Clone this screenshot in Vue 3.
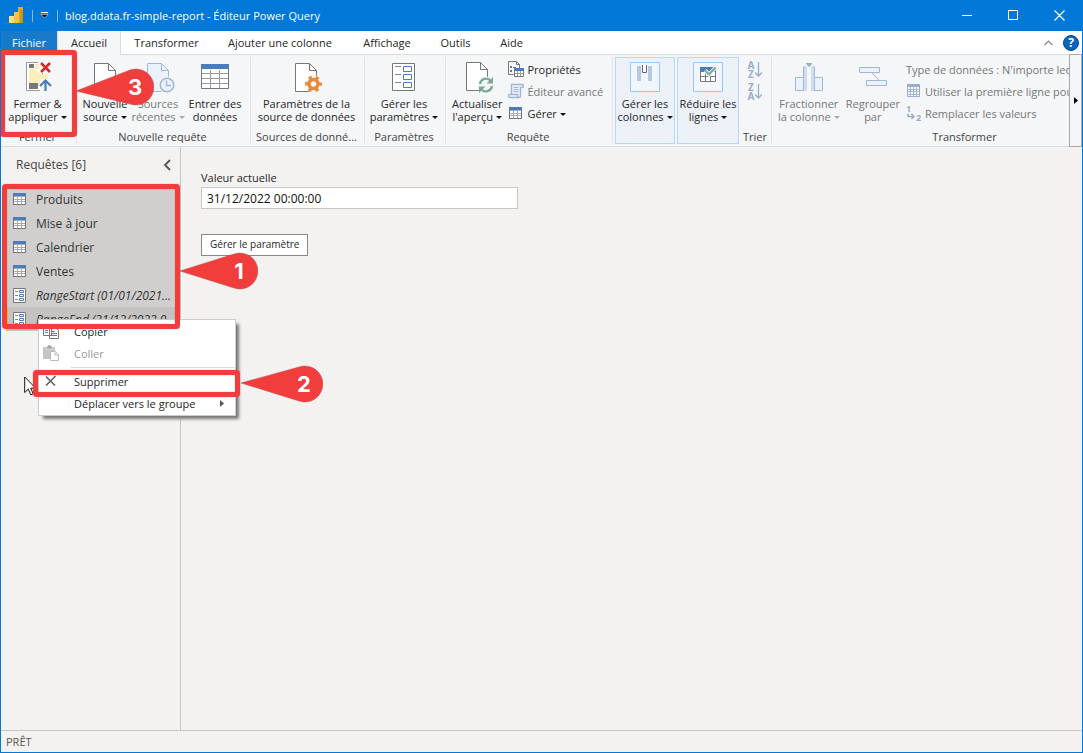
<script setup>
import { ref } from 'vue'

const tabs = ['Fichier', 'Accueil', 'Transformer', 'Ajouter une colonne', 'Affichage', 'Outils', 'Aide']
const activeTab = ref('Accueil')
const currentValue = ref('31/12/2022 00:00:00')
const queries = [
  { name: 'Produits', kind: 'table' },
  { name: 'Mise à jour', kind: 'table' },
  { name: 'Calendrier', kind: 'table' },
  { name: 'Ventes', kind: 'table' },
  { name: 'RangeStart (01/01/2021...', kind: 'param' },
  { name: 'RangeEnd (31/12/2022 0...', kind: 'param', current: true },
]
</script>

<template>
  <div class="window">
    <svg class="defs" width="0" height="0" aria-hidden="true">
      <symbol id="doc" viewBox="0 0 22 29">
        <path d="M.5.5h14l7 7v21H.5z" fill="#fff" stroke="currentColor" />
        <path d="M14.5.5v7h7" fill="none" stroke="currentColor" />
      </symbol>
      <symbol id="table" viewBox="0 0 13 12">
        <path d="M0 0h13v12H0z" fill="#777" />
        <path d="M1 3h11v8H1z" fill="#aaa" />
        <path d="M0 0h13v3H0z" fill="#4a7ebb" />
        <path d="M1 4h3v2H1zM5 4h3v2H5zM9 4h3v2H9zM1 7h3v1H1zM5 7h3v1H5zM9 7h3v1H9zM1 9h3v2H1zM5 9h3v2H5zM9 9h3v2H9z" fill="#fff" />
      </symbol>
      <symbol id="param" viewBox="0 0 13 15">
        <path d="M.5.5h12v14H.5z" fill="#fff" stroke="#777" />
        <path d="M2 3.5h3M2 7.5h3M2 11.5h3" stroke="#888" />
        <path d="M6.500 2.500h4v2h-4zM6.500 6.500h4v2h-4zM6.500 10.500h4v2h-4z" fill="#fff" stroke="#4a7ebb" />
      </symbol>
    </svg>

    <header class="titlebar">
      <svg class="logo" width="16" height="18" viewBox="0 0 16 18" aria-hidden="true">
        <path d="M9 0h5v16H9z" fill="#e4a81c" /><path d="M5 5h5v11H5z" fill="#f4c640" /><path d="M0 9h5v7H0z" fill="#fce07d" />
        <path d="M11 3h3v13h-3z" fill="#d59210" />
      </svg>
      <span class="bar"></span>
      <button class="quick" aria-label="Personnaliser la barre d'accès rapide">
        <svg width="9" height="9" viewBox="0 0 9 9"><path d="M1 1.500h7" stroke="#fff" /><path d="M1 3.500h7L4.500 7z" fill="#000" stroke="#fff" stroke-width=".5" /></svg>
      </button>
      <span class="bar"></span>
      <h1>blog.ddata.fr-simple-report - Éditeur Power Query</h1>
      <button class="sys" aria-label="Réduire"><svg width="11" height="11"><path d="M0 5.500h10" stroke="#fff" /></svg></button>
      <button class="sys" aria-label="Agrandir"><svg width="11" height="11"><path d="M.5.5h9v9h-9z" fill="none" stroke="#fff" /></svg></button>
      <button class="sys" aria-label="Fermer"><svg width="11" height="11"><path d="M.5.5l10 10M10.500.5l-10 10" stroke="#fff" stroke-width="1.200" /></svg></button>
    </header>

    <nav class="tabs">
      <button v-for="t in tabs" :key="t" class="tab" :class="{ file: t === 'Fichier', active: t === activeTab }" @click="activeTab = t">{{ t }}</button>
      <span class="tab-tools">
        <button class="plain" aria-label="Réduire le ruban"><svg width="9" height="6"><path d="M.5 5l4-4 4 4" fill="none" stroke="#888" stroke-width="1.200" /></svg></button>
        <button class="help" aria-label="Aide en ligne">?</button>
      </span>
    </nav>

    <section class="ribbon">
      <div class="group g-close">
        <div class="tools">
          <button class="big">
            <svg width="28" height="32" viewBox="-2 0 28 32">
              <path d="M.5 1.500h16v28H.5z" fill="#fff" stroke="#999" />
              <path d="M3 8h5l8 6v10H3z" fill="#fbeeb9" /><path d="M3 3h5v4H3z" fill="#777" /><path d="M9 3h6v5H9z" fill="#fbeeb9" />
              <path d="M3 22h9v6H3z" fill="#777" />
              <path d="M12 0h12v12H14z" fill="#f5f6f7" />
              <path d="M14 13h8v6h-8z" fill="#fbeeb9" />
              <path d="M15 2l9 9M24 2l-9 9" stroke="#d02b2b" stroke-width="2.500" />
              <path d="M14 18h12v13H14z" fill="#f5f6f7" />
              <path d="M19.500 30V20M14 25l5.500-5.500L25 25" fill="none" stroke="#4a7ebb" stroke-width="2.200" />
            </svg>
            <span>Fermer &amp;<br>appliquer<i class="caret"></i></span>
          </button>
        </div>
        <div class="caption">Fermer</div>
      </div>

      <div class="group g-new">
        <div class="tools">
          <button class="big">
            <svg class="gray" width="22" height="32" viewBox="0 -2 22 32"><use href="#doc" width="22" height="29" /></svg>
            <span>Nouvelle<br>source<i class="caret"></i></span>
          </button>
          <button class="big off">
            <svg class="pale" width="34" height="32" viewBox="-6 -2 34 32">
              <path d="M.5.5h14l7 7v21H.5z" fill="#eaf1fb" stroke="#a3b6d4" /><path d="M14.500.5v7h7" fill="none" stroke="#a3b6d4" />
              <circle cx="20" cy="22" r="8.500" fill="#f5f6f7" /><circle cx="20" cy="22" r="6.800" fill="#eaf1fb" stroke="#a3b6d4" stroke-width="1.600" /><path d="M19.500 17.500v5h4.500" fill="none" stroke="#a3b6d4" stroke-width="1.400" />
            </svg>
            <span>Sources<br>récentes<i class="caret"></i></span>
          </button>
          <button class="big">
            <svg width="28" height="32" viewBox="0 -3 28 32">
              <path d="M.5.5h27v24H.5z" fill="#fff" stroke="#777" /><path d="M9.500 6v18M18.500 6v18M1 9.500h26M1 14.500h26M1 19.500h26" stroke="#999" /><path d="M0 0h28v5H0z" fill="#4a7ebb" />
            </svg>
            <span>Entrer des<br>données</span>
          </button>
        </div>
        <div class="caption">Nouvelle requête</div>
      </div>

      <div class="group g-sources">
        <div class="tools">
          <button class="big">
            <svg class="gray" width="34" height="32" viewBox="-6 -2 34 32">
              <use href="#doc" width="22" height="29" /><circle cx="18.500" cy="21" r="9" fill="#f5f6f7" />
              <circle cx="18.500" cy="21" r="4.500" fill="none" stroke="#e58a3c" stroke-width="3.500" />
              <circle cx="18.500" cy="21" r="7" fill="none" stroke="#e58a3c" stroke-width="2.800" stroke-dasharray="3.400 3.930" stroke-dashoffset="1.700" />
            </svg>
            <span>Paramètres de la<br>source de données</span>
          </button>
        </div>
        <div class="caption">Sources de donné...</div>
      </div>

      <div class="group g-params">
        <div class="tools">
          <button class="big">
            <svg width="24" height="32" viewBox="0 -2 24 32">
              <path d="M.5.5h22v27H.5z" fill="#fff" stroke="#777" /><path d="M3 3.500h6M3 11.500h6M3 19.500h6" stroke="#888" />
              <path d="M11.500 3.500h8v5h-8zM11.500 11.500h8v5h-8zM11.500 19.500h8v5h-8z" fill="none" stroke="#4a7ebb" />
            </svg>
            <span>Gérer les<br>paramètres<i class="caret"></i></span>
          </button>
        </div>
        <div class="caption">Paramètres</div>
      </div>

      <div class="group g-query">
        <div class="tools">
          <button class="big">
            <svg class="gray" width="34" height="32" viewBox="-6 -1 34 32">
              <use href="#doc" width="22" height="29" /><circle cx="20" cy="23" r="8.500" fill="#f5f6f7" />
              <path d="M14 22a6.200 6.200 0 0 1 11-3M26 24a6.200 6.200 0 0 1-11 3" fill="none" stroke="#7aaa93" stroke-width="2.400" />
              <path d="M27 15v6.500h-6.500zM13 31v-6.500h6.500z" fill="#7aaa93" />
            </svg>
            <span>Actualiser<br>l'aperçu<i class="caret"></i></span>
          </button>
          <div class="stack">
            <button class="small">
              <svg width="16" height="16" viewBox="0 0 16 16">
                <path d="M.5 13.500V.5h8l3 3v4M8.500.5v3h3M.5 13.500h5" fill="none" stroke="#777" /><path d="M2 5h2v2H2zM2 9h2v2H2z" fill="#777" /><path d="M5 6.500h3" stroke="#777" />
                <path d="M6.500 8.500h9v7h-9z" fill="#fff" stroke="#777" /><path d="M9.500 9v6M12.500 9v6M7 12.500h8" stroke="#999" /><path d="M6 7h10v3H6z" fill="#4a7ebb" />
              </svg>Propriétés
            </button>
            <button class="small off">
              <svg width="16" height="16" viewBox="0 0 16 16">
                <path d="M3.500 11V1.500H14c2 0 2 3 0 3h-1.500V13c0 2-3 2-3 0v-1.500h-8c-2 0-1 3 .5 3h9" fill="#eaf1fb" stroke="#a3b6d4" stroke-width="1.400" /><path d="M5.500 4.500h5M5.500 6.500h5M5.500 8.500h5" stroke="#a3b6d4" />
              </svg>Éditeur avancé
            </button>
            <button class="small">
              <svg width="16" height="16" viewBox="-1 -2 16 16"><use href="#table" width="13" height="12" /></svg><span>Gérer<i class="caret"></i></span>
            </button>
          </div>
        </div>
        <div class="caption">Requête</div>
      </div>

      <button class="tile t-cols">
        <svg width="30" height="30" viewBox="0 0 30 30">
          <path d="M.5.5h29v29H.5z" fill="#f1f6fd" stroke="#9bc6f5" /><path d="M7 4h4v15H7zM18 4h4v15h-4z" fill="#b6c9e2" /><path d="M12.500 3v7.500h4V3" fill="#fff" stroke="#666" />
        </svg>
        <span>Gérer les<br>colonnes<i class="caret"></i></span>
      </button>
      <button class="tile t-rows">
        <svg width="30" height="30" viewBox="0 0 30 30">
          <path d="M.5.5h29v29H.5z" fill="#f1f6fd" stroke="#9bc6f5" /><path d="M7.500 9.500h15v10h-15z" fill="#fff" stroke="#777" /><path d="M12.500 10v9M17.500 10v9M8 14.500h14" stroke="#777" /><path d="M7 5h16v5H7z" fill="#4a7ebb" />
          <path d="M12 8.500l4 4 6.500-7" fill="none" stroke="#fff" stroke-width="4" /><path d="M12 8.500l4 4 6.500-7" fill="none" stroke="#7aaa93" stroke-width="2.200" />
        </svg>
        <span>Réduire les<br>lignes<i class="caret"></i></span>
      </button>

      <div class="group g-sort">
        <div class="tools sorts">
          <button class="sort" aria-label="Trier par ordre croissant">
            <span class="letters"><b>A</b><b>Z</b></span>
            <svg width="7" height="16"><path d="M3.500 0v14M0 10.500l3.500 3.500L7 10.500" fill="none" stroke="#9aaccb" stroke-width="1.300" /></svg>
          </button>
          <button class="sort" aria-label="Trier par ordre décroissant">
            <span class="letters"><b>Z</b><b>A</b></span>
            <svg width="7" height="16"><path d="M3.500 0v14M0 10.500l3.500 3.500L7 10.500" fill="none" stroke="#9aaccb" stroke-width="1.300" /></svg>
          </button>
        </div>
        <div class="caption">Trier</div>
      </div>

      <div class="group g-transform">
        <div class="tools">
          <button class="big off">
            <svg width="28" height="32" viewBox="0 -2 28 32">
              <path d="M8 27.500H.5v-13H8M20 27.500h7.500v-13H20" fill="#eaf3fd" stroke="#a3b6d4" /><path d="M8 3h4v25H8zM16 3h4v25h-4z" fill="#cfdcee" /><path d="M8.500 28V3.500M19.500 28V3.500" stroke="#a3b6d4" /><path d="M11 0h6v1l-3 3-3-3z" fill="#9aaccb" />
            </svg>
            <span>Fractionner<br>la colonne<i class="caret"></i></span>
          </button>
          <button class="big off">
            <svg width="28" height="32" viewBox="0 -2 28 32">
              <path d="M.5 4.500h20v5H.5zM7.500 17.500h20v5h-20z" fill="#eaf3fd" stroke="#a3b6d4" /><path d="M13 10l7 7" stroke="#a3b6d4" />
            </svg>
            <span>Regrouper<br>par</span>
          </button>
          <div class="stack wide">
            <button class="small off">Type de données : N'importe lequel</button>
            <button class="small off">
              <svg width="16" height="16" viewBox="0 0 16 16"><path d="M1.500 1.500h12v12h-12z" fill="#fff" stroke="#9aaccb" /><path d="M4.500 4v10M7.500 4v10M10.500 4v10M1 6.500h13M1 8.500h13M1 11.500h13" stroke="#a3b6d4" /><path d="M1 1h13v3H1z" fill="#9aaccb" /></svg>Utiliser la première ligne pour les en-têtes
            </button>
            <button class="small off">
              <svg width="16" height="16" viewBox="0 0 16 16"><text x="0" y="7">1</text><text x="10" y="16">2</text><path d="M2 8.500v3h6M5.500 9l2.500 2.500L5.500 14" fill="none" stroke="#9aaccb" stroke-width="1.500" /></svg>Remplacer les valeurs
            </button>
          </div>
        </div>
        <div class="caption">Transformer</div>
      </div>
      <button class="scroll" aria-label="Faire défiler le ruban"><svg width="4" height="7"><path d="M0 0l4 3.500L0 7z" fill="#000" /></svg></button>
    </section>

    <main class="body">
      <aside class="side">
        <div class="side-head">
          <h2>Requêtes [6]</h2>
          <button class="plain" aria-label="Réduire le volet"><svg width="8" height="12"><path d="M7 1L2 6l5 5" fill="none" stroke="#555" stroke-width="1.800" /></svg></button>
        </div>
        <ul class="queries">
          <li v-for="q in queries" :key="q.name" :class="{ param: q.kind === 'param', current: q.current }">
            <svg v-if="q.kind === 'table'" width="13" height="12"><use href="#table" width="13" height="12" /></svg>
            <svg v-else width="13" height="15"><use href="#param" width="13" height="15" /></svg>
            <span>{{ q.name }}</span>
          </li>
        </ul>
      </aside>
      <section class="content">
        <label for="current-value">Valeur actuelle</label>
        <input id="current-value" v-model="currentValue" type="text">
        <button class="manage">Gérer le paramètre</button>
      </section>
    </main>

    <footer class="status">PRÊT</footer>

    <svg class="pointer" width="13" height="20" viewBox="0 0 13 20" aria-hidden="true"><path d="M.7 1v15.500l3.600-3.400 2.500 5.700 2.400-1-2.500-5.600h5z" fill="#fff" stroke="#112" /></svg>

    <div class="menu" role="menu">
      <button role="menuitem">
        <svg width="16" height="16" viewBox="0 0 16 16"><path d="M.5 1.500h6l2 2v9h-8zM6.500 4.500h6l3 3v8h-9z" fill="#fff" stroke="#777" /><path d="M2 5.500h3M2 7.500h3M2 9.500h3M8 8.500h4M8 10.500h6M8 12.500h6" stroke="#4a7ebb" /></svg>Copier
      </button>
      <button role="menuitem" class="muted">
        <svg width="16" height="16" viewBox="0 0 16 16"><path d="M0 2h12v12H0z" fill="#c4c4c4" /><path d="M3 2h1V1h1V0h3v1h1v1h1v2H3z" fill="#a5a5a5" stroke="#fff" stroke-width=".5" /><path d="M7.500 6.500h5l3 3v6h-8z" fill="#fff" stroke="#bbb" /><path d="M12 7v3h3" fill="none" stroke="#bbb" /></svg>Coller
      </button>
      <hr>
      <button role="menuitem">
        <svg width="16" height="16" viewBox="0 0 16 16"><path d="M3 3.500l9 9M12.500 3l-9.500 9.500" stroke="#666" stroke-width="1.700" /></svg>Supprimer
      </button>
      <button role="menuitem">
        <svg width="16" height="16"></svg>Déplacer vers le groupe
        <svg class="more" width="4" height="7"><path d="M0 0l4 3.500L0 7z" fill="#555" /></svg>
      </button>
    </div>

    <div class="mark mark-apply"></div>
    <div class="mark mark-queries"></div>
    <div class="mark mark-delete"></div>
    <svg class="callout c1" width="78" height="38" viewBox="0 0 78 38"><path d="M0 19L54 2a18 18 0 1 1 0 34z" /><text x="59" y="27">1</text></svg>
    <svg class="callout c2" width="82" height="38" viewBox="0 0 82 38"><path d="M0 18L58 2a18 18 0 1 1 0 34z" /><text x="63" y="27">2</text></svg>
    <svg class="callout c3" width="78" height="38" viewBox="0 0 78 38"><path d="M0 23L54 2a18 18 0 1 1 0 34z" /><text x="59" y="27">3</text></svg>
  </div>
</template>

<style>
html, body { margin: 0; background: #f3f2f1; }
</style>

<style scoped>
* { box-sizing: border-box; }
.window { position: relative; display: flex; flex-direction: column; min-height: 100vh; border: 1px solid #0078d7; border-top: 0; background: #f3f2f1; color: #262626; font: 11px/13px "Open Sans", "Noto Sans", sans-serif; overflow: hidden; }
button { margin: 0; padding: 0; border: 0; background: none; font: inherit; color: inherit; white-space: nowrap; }
svg { display: block; flex: none; }
h1, h2 { margin: 0; font-weight: 400; }
.defs { position: absolute; }

.titlebar { display: flex; align-items: center; height: 31px; padding-left: 8px; background: #0078d7; color: #fff; }
.titlebar h1 { flex: 1; font-size: 11px; line-height: 16px; white-space: nowrap; }
.bar { width: 1px; height: 12px; margin: 0 7px; background: #8fb8dc; }
.quick { width: 10px; }
.sys { width: 46px; height: 31px; display: grid; place-items: center; }

.tabs { display: grid; grid-template-columns: 56px 64px 91px 136px 78px 59px 53px 1fr; height: 24px; background: #fff; border-bottom: 1px solid #dadbdc; }
.tab { height: 24px; padding-bottom: 2px; }
.tab.file { height: 23px; padding-bottom: 1px; background: #1979ca; color: #fff; }
.tab.active { background: #f5f6f7; border: solid #dadbdc; border-width: 0 1px; }
.tab-tools { display: flex; justify-content: flex-end; align-items: center; gap: 10px; padding-right: 3px; }
.help { width: 16px; height: 16px; border: 1px solid #0a4a90; border-radius: 50%; background: #0a64c0; color: #fff; font-weight: 700; font-size: 12px; line-height: 14px; }

.ribbon { display: flex; height: 92px; padding-top: 2px; background: #f5f6f7; border-bottom: 1px solid #dadbdc; }
.group { display: flex; flex-direction: column; flex: none; height: 86px; padding-right: 2px; border-right: 1px solid #e2e3e4; overflow: hidden; }
.tools { display: flex; flex: 1; justify-content: center; padding-top: 4px; }
.caption { height: 13px; text-align: center; white-space: nowrap; color: #444; }
.big { display: flex; flex-direction: column; align-items: center; gap: 4px; height: 62px; }
.off { color: #777; }
.gray { color: #777; }
.caret { display: inline-block; margin-left: 3px; vertical-align: 2px; border: solid transparent; border-width: 3px 3px 0; border-top-color: #111; }
.off .caret { border-top-color: #aaa; }
.stack { display: flex; flex-direction: column; margin-top: -3px; }
.small { display: flex; align-items: center; gap: 3px; height: 22px; }
.small text { font: 700 9px "Open Sans", sans-serif; fill: #9aaccb; }
.g-close { width: 76px; }
.g-new { width: 174px; }
.g-new .tools { display: grid; grid-template-columns: 52px 54px 60px; justify-items: center; justify-content: start; padding-left: 2px; }
.g-sources { width: 114px; }
.g-params { width: 81px; }
.g-query { width: 167px; }
.g-query .tools { justify-content: start; padding-left: 6px; gap: 6px; }
.tile { display: flex; flex-direction: column; align-items: center; flex: none; gap: 5px; height: 87px; padding-top: 4px; background: #ecf1f8; border: 1px solid #b9d6f4; }
.t-cols { width: 60px; margin: 0 2px; }
.t-rows { width: 62px; }
.g-sort { width: 33px; padding-right: 0; }
.sorts { flex-direction: column; align-items: center; justify-content: start; gap: 4px; }
.sort { display: flex; align-items: center; gap: 1px; height: 18px; color: #9aaccb; }
.letters { display: flex; flex-direction: column; font-size: 10px; line-height: 9px; }
.g-transform { flex: 1 1 0; min-width: 0; border-right: 0; }
.g-transform .tools { justify-content: start; padding-left: 6px; gap: 6px; }
.g-transform .caption { padding-left: 90px; }
.scroll { display: grid; place-items: center; flex: none; width: 13px; height: 93px; margin-top: -3px; border: 1px solid #aaa; background: #f5f6f7; }

.body { display: flex; flex: 1; }
.side { flex: none; width: 180px; border-right: 1px solid #c8c6c4; }
.side-head { display: flex; align-items: center; justify-content: space-between; height: 36px; padding: 0 9px 0 15px; }
.side-head h2 { font-size: 12px; line-height: 16px; color: #444; }
.queries { margin: 4px 2px 0 5px; padding: 0; list-style: none; background: #d0cfce; color: #333; }
.queries li { display: flex; align-items: center; gap: 10px; height: 24px; padding-left: 7px; font-size: 12px; white-space: nowrap; overflow: hidden; }
.queries .param { font-style: italic; }
.queries .current { background: #c4c3c2; border-left: 2px solid #f2c811; padding-left: 5px; }
.content { flex: 1; display: flex; flex-direction: column; align-items: flex-start; padding: 22px 20px; }
.content label { font-size: 11px; line-height: 18px; }
.content input { width: 317px; max-width: 100%; height: 22px; padding: 0 5px; border: 1px solid #c8c6c4; background: #fff; font: 12px "Open Sans", sans-serif; color: #111; }
.manage { height: 22px; margin-top: 25px; padding: 0 8px 1px; border: 1px solid #8a8886; background: #fff; font-size: 10px; }
.status { height: 22px; padding: 4px 5px; border-top: 1px solid #c8c6c4; color: #555; }

.pointer { position: absolute; left: 23px; top: 376px; }
.menu { position: absolute; left: 37px; top: 319px; width: 198px; padding-bottom: 1px; background: #fff; border: 1px solid #ccc; box-shadow: 4px 4px 3px -1px #777; }
.menu button { display: flex; align-items: center; gap: 15px; width: 100%; height: 22px; padding: 0 11px 0 4px; text-align: left; }
.menu hr { height: 1px; margin: 3px 0 2px 32px; border: 0; background: #ddd; }
.menu .muted { color: #999; }
.menu .more { margin-left: auto; }

.mark { position: absolute; border: 5px solid #f23d3d; border-radius: 4px; box-shadow: 0 0 1px #a44, inset 0 0 1px #a44; pointer-events: none; }
.mark-apply { left: -1px; top: 50px; width: 77px; height: 87px; }
.mark-queries { left: 1px; top: 184px; width: 178px; height: 145px; }
.mark-delete { left: 32px; top: 370px; width: 207px; height: 27px; }
.callout { position: absolute; pointer-events: none; }
.callout path { fill: #f23d3d; stroke: #b55; stroke-width: .5; }
.callout text { font: 700 22px Inter, sans-serif; fill: #fff; text-anchor: middle; }
.c1 { left: 179px; top: 252px; }
.c2 { left: 240px; top: 365px; }
.c3 { left: 75px; top: 68px; }
</style>
